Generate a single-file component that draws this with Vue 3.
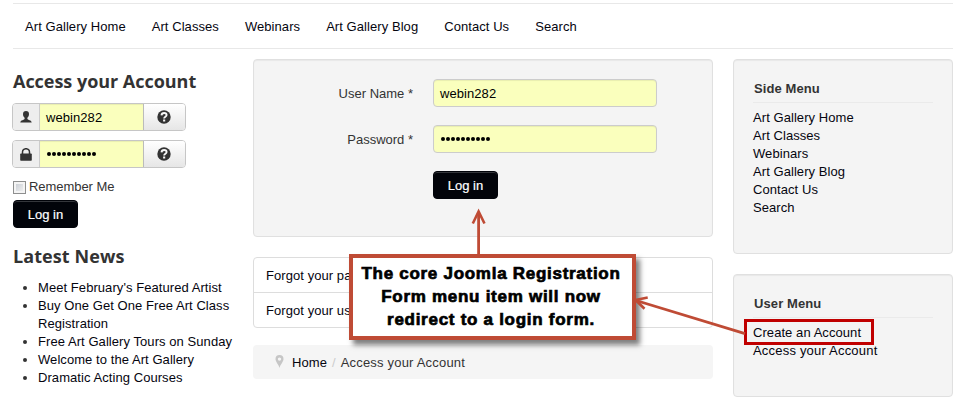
<script setup>
const navItems = ['Art Gallery Home', 'Art Classes', 'Webinars', 'Art Gallery Blog', 'Contact Us', 'Search']
const news = [
  "Meet February's Featured Artist",
  'Buy One Get One Free Art Class Registration',
  'Free Art Gallery Tours on Sunday',
  'Welcome to the Art Gallery',
  'Dramatic Acting Courses',
]
const fields = [
  { icon: 'user', value: 'webin282', masked: false },
  { icon: 'lock', value: '', masked: true },
]
const formRows = [
  { label: 'User Name *', value: 'webin282', masked: false },
  { label: 'Password *', value: '', masked: true },
]
</script>

<template>
  <div class="page">
    <nav class="nav">
      <a v-for="item in navItems" :key="item">{{ item }}</a>
    </nav>

    <div class="columns">
      <aside class="left">
        <h3>Access your Account</h3>
        <div v-for="f in fields" :key="f.icon" class="group">
          <span class="addon">
            <svg v-if="f.icon === 'user'" width="12" height="12" viewBox="0 0 12 12">
              <path d="M6 0C4 0 3 1.200 3 3c0 1.700.6 2.800 1.600 3.700v1.300C4.400 9 .4 9 .3 11.500h11.400C11.600 9 7.600 9 7.400 8V6.700C8.400 5.800 9 4.700 9 3 9 1.200 8 0 6 0z" fill="#333" />
            </svg>
            <svg v-else width="12" height="13" viewBox="0 0 12 13">
              <path d="M2.500 6V4a3.500 3.300 0 0 1 7 0v2" fill="none" stroke="#333" stroke-width="1.500" />
              <rect x="0.200" y="5.500" width="11.600" height="7.300" rx="0.800" fill="#333" />
            </svg>
          </span>
          <span class="value">
            <span v-if="f.masked" class="dots"><i v-for="n in 10" :key="n"></i></span>
            <span v-else class="text">{{ f.value }}</span>
          </span>
          <span class="help">
            <svg width="14" height="14" viewBox="0 0 14 14">
              <circle cx="7" cy="7" r="6.700" fill="#333" />
              <path d="M4.500 5.400C4.600 3.800 5.600 3 7.100 3c1.500 0 2.500.8 2.500 2C9.600 6.700 7.200 6.700 7.100 8.500" fill="none" stroke="#f8f8f8" stroke-width="1.900" />
              <rect x="6.100" y="9.500" width="2.100" height="2" fill="#f8f8f8" />
            </svg>
          </span>
        </div>
        <div class="remember"><span class="check"></span>Remember Me</div>
        <button class="btn">Log in</button>
        <h3 class="news-title">Latest News</h3>
        <ul class="news">
          <li v-for="n in news" :key="n">{{ n }}</li>
        </ul>
      </aside>

      <main class="center">
        <section class="well form">
          <div v-for="r in formRows" :key="r.label" class="row">
            <label>{{ r.label }}</label>
            <span class="input">
              <span v-if="r.masked" class="dots"><i v-for="n in 10" :key="n"></i></span>
              <span v-else class="text">{{ r.value }}</span>
            </span>
          </div>
          <button class="btn">Log in</button>
        </section>
        <div class="links">
          <a>Forgot your pa</a>
          <a>Forgot your us</a>
        </div>
        <div class="crumbs">
          <svg width="9" height="13" viewBox="0 0 9 13">
            <path fill-rule="evenodd" d="M4.500 0A4 4 0 0 0 .5 4C.5 7 3.500 9 4.500 13 5.500 9 8.500 7 8.500 4A4 4 0 0 0 4.500 0zm0 2.400a1.700 1.700 0 1 1 0 3.400 1.700 1.700 0 0 1 0-3.400z" fill="#c6c6c6" />
          </svg>
          <a>Home</a><span class="sep">/</span><span class="wide">Access your Account</span>
        </div>
      </main>

      <aside class="right">
        <section class="well menu side">
          <h4>Side Menu</h4>
          <a v-for="item in navItems" :key="item">{{ item }}</a>
        </section>
        <section class="well menu user">
          <h4>User Menu</h4>
          <a class="marked">Create an Account</a>
          <a class="wide">Access your Account</a>
        </section>
      </aside>
    </div>

    <div class="callout">
      <span>The core Joomla Registration</span>
      <span>Form menu item will now</span>
      <span>redirect to a login form.</span>
    </div>
    <svg class="arrows" width="961" height="404" viewBox="0 0 961 404">
      <g fill="none" stroke="#bf4b35" stroke-width="2.800">
        <path d="M478.600 255V212" />
        <path d="M472.800 223.500L478.600 211.500 484.500 223.500" stroke-width="2.600" />
        <path d="M745 333.700L636 300.500" />
        <path d="M647.700 297.500L635.500 300 644.500 308.700" stroke-width="2.600" />
      </g>
    </svg>
  </div>
</template>

<style>
body { background: #fff; }
</style>

<style scoped>
* { box-sizing: border-box; }
.page {
  position: relative;
  width: 961px;
  height: 404px;
  overflow: hidden;
  padding: 3px 8px 0 13px;
  font: 13px/18px "Liberation Sans", Arial, sans-serif;
  letter-spacing: .065px;
  color: #333;
}
a { color: #05050f; }
.nav {
  display: flex;
  gap: 26px;
  height: 46px;
  padding: 14px 12px 0;
  border-top: 1px solid #e8e8e8;
  border-bottom: 1px solid #e8e8e8;
}
.columns { display: flex; gap: 20px; padding-top: 10px; }
.left { width: 220px; }
.center { width: 460px; }
.right { width: 220px; }
h3 {
  margin: 9px 0 8px;
  font: 700 18px/27px "Open Sans", sans-serif;
  letter-spacing: -.03px;
  color: #333;
  white-space: nowrap;
}
.group {
  display: flex;
  width: 174px;
  height: 28px;
  margin: 0 0 9px -1px;
  border: 1px solid #c6c6c6;
  border-radius: 4px;
  overflow: hidden;
}
.addon {
  display: flex;
  align-items: center;
  justify-content: center;
  width: 27px;
  background: #eee;
  border-right: 1px solid #ccc;
}
.value {
  display: flex;
  align-items: center;
  width: 103px;
  padding-left: 6px;
  background: #faffbd;
  color: #000;
  box-shadow: inset 0 1px 1px rgba(0, 0, 0, .07);
}
.text { padding-top: 2px; }
.help {
  display: flex;
  align-items: center;
  justify-content: center;
  flex: 1;
  padding: 0 2px 1px 0;
  border-left: 1px solid #bbb;
  background: linear-gradient(#fff, #e6e6e6);
}
.dots { display: flex; gap: 1px; padding-left: 1px; }
.dots i { width: 4px; height: 4px; border-radius: 50%; background: #000; }
.remember { display: flex; align-items: center; gap: 3px; height: 18px; margin-top: 10px; letter-spacing: -.05px; }
.check {
  width: 13px;
  height: 13px;
  margin-top: 1px;
  border: 1px solid #8e8f8f;
  background: linear-gradient(135deg, #c3c8cf, #f6f6f6);
  box-shadow: inset 0 0 0 2px #f4f4f4;
}
.btn {
  display: block;
  width: 65px;
  height: 28px;
  margin: 4px 0 0;
  padding: 2px 0 0;
  border: 1px solid #02040a;
  border-radius: 4px;
  background: #02040a;
  box-shadow: inset 0 1px 0 rgba(255, 255, 255, .2);
  color: #fff;
  font: 13px/18px "Liberation Sans", Arial, sans-serif;
  -webkit-text-stroke: .2px #fff;
}
.news-title { margin: 15px 0 9px; letter-spacing: .08px; }
.news { margin: 0 -10px 0 0; padding: 0 0 0 25px; }
.news li { max-width: 198px; color: #05050f; }
.news li::marker { color: #333; }
.well {
  border: 1px solid #e0e0e0;
  border-radius: 4px;
  background: #f4f4f4;
  box-shadow: inset 0 1px 1px rgba(0, 0, 0, .05);
}
.form { height: 178px; padding: 19px; }
.row { display: flex; align-items: center; height: 28px; margin-bottom: 18px; }
.row label { width: 140px; padding-top: 2px; text-align: right; letter-spacing: 0; }
.input {
  display: flex;
  align-items: center;
  width: 224px;
  height: 28px;
  margin-left: 20px;
  padding-left: 6px;
  border: 1px solid #ccc;
  border-radius: 4px;
  background: #faffbd;
  box-shadow: inset 0 1px 1px rgba(0, 0, 0, .07);
  color: #000;
}
.form .btn { margin: 0 0 0 160px; }
.links { margin-top: 20px; border: 1px solid #ddd; border-radius: 4px; }
.links a { display: block; height: 34px; padding: 9px 12px 0; }
.links a + a { height: 35px; border-top: 1px solid #ddd; }
.crumbs {
  display: flex;
  align-items: center;
  height: 34px;
  margin-top: 17px;
  padding: 2px 0 0 22px;
  border-radius: 4px;
  background: #f5f5f5;
}
.crumbs a { margin-left: 8px; }
.crumbs svg { margin-top: -4px; }
.sep { margin: 0 5px; color: #ccc; }
.wide { letter-spacing: .2px; }
.menu { padding: 19px; }
.menu h4 {
  height: 24px;
  margin: 0 0 6px;
  padding-left: 1px;
  border-bottom: 1px solid #eaeaea;
  font-size: 13px;
  line-height: 20px;
  letter-spacing: .1px;
}
.menu a { display: block; }
.side { height: 195px; }
.user { height: 123px; margin-top: 20px; }
.menu .marked {
  width: 130px;
  height: 26px;
  margin: -5px 0 -3px -9px;
  padding: 2px 6px 0;
  border: 3px solid #c00000;
}
.arrows { position: absolute; left: 0; top: 0; }
.callout {
  position: absolute;
  left: 349px;
  top: 254px;
  display: flex;
  flex-direction: column;
  align-items: center;
  width: 287px;
  height: 86px;
  padding: 4px 3px 0 0;
  border: 4px solid #bf4b35;
  background: #fff;
  box-shadow: 4px 5px 5px rgba(0, 0, 0, .5);
  color: #000;
  font: 700 17px/23px "Liberation Sans", Arial, sans-serif;
  letter-spacing: .72px;
  -webkit-text-stroke: .7px #000;
  white-space: nowrap;
}
</style>
